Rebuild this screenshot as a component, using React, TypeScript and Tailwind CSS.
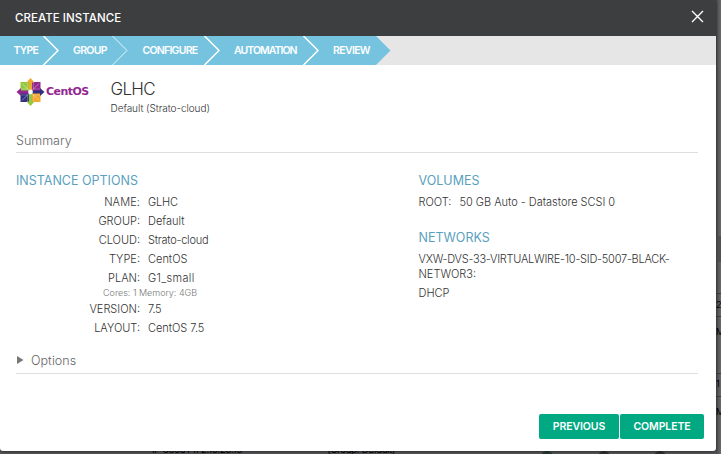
import React from "react";

const body = "font-['Inter','Liberation_Sans',sans-serif]";
const strong = "font-['Inter','Liberation_Sans',sans-serif]";

function Step({ label, width, pad, tracking, line }: { label: string; width: string; pad: string; tracking: string; line: number }) {
  return (
    <div className={`flex h-full items-center justify-between bg-[#76c3df] ${width} ${pad}`}>
      <span className={`${strong} ${tracking} whitespace-nowrap text-[10.5px] font-semibold text-white`}>{label}</span>
      <svg width="16" height="29" viewBox="0 0 16 29" className="shrink-0">
        <path d="M0 -0.5 L15 14.5 L0 29.5" fill="none" stroke="#fff" strokeWidth={line} />
      </svg>
    </div>
  );
}

function Row({ label, value, tl = "", tv = "" }: { label: string; value: string; tl?: string; tv?: string }) {
  return (
    <div className="flex h-[19px] items-center text-[11px] font-light text-[#333]">
      <span className={`flex w-[124px] justify-end ${tl}`}>{label}</span>
      <span className={`ml-[8px] whitespace-nowrap ${tv}`}>{value}</span>
    </div>
  );
}

function Logo() {
  return (
    <div className="flex h-[28px] w-[73px] items-center">
      <svg width="29" height="28" viewBox="0 0 28 28" className="shrink-0">
        <rect x="4" y="4" width="9.7" height="9.7" fill="#94c83d" />
        <rect x="14.3" y="4" width="9.7" height="9.7" fill="#93278f" />
        <rect x="4" y="14.3" width="9.7" height="9.7" fill="#32307e" />
        <rect x="14.3" y="14.3" width="9.7" height="9.7" fill="#efa72c" />
        <path d="M5.5 5.5 L22.5 22.5 M22.5 5.5 L5.5 22.5" stroke="#fff" strokeWidth=".9" opacity=".45" />
        <path d="M11 4 V11 H4 M17 4 V11 H24 M11 24 V17 H4 M17 24 V17 H24" fill="none" stroke="#fff" strokeWidth=".5" opacity=".45" />
        <path d="M14 0 L18 4.5 H15.6 V13 H12.4 V4.5 H10Z" fill="#efa72c" />
        <path d="M28 14 L23.5 18 V15.6 H15 V12.4 H23.5 V10Z" fill="#32307e" />
        <path d="M14 28 L10 23.5 H12.4 V15 H15.6 V23.5 H18Z" fill="#94c83d" />
        <path d="M0 14 L4.5 10 V12.4 H13 V15.6 H4.5 V18Z" fill="#93278f" />
        <circle cx="14" cy="14" r="2.4" fill="#fff" />
      </svg>
      <span className="ml-px font-['DejaVu_Sans',sans-serif] text-[11px] font-bold tracking-[-0.55px] text-[#93278f]">CentOS</span>
    </div>
  );
}

export default function App() {
  return (
    <div className={`${body} relative h-[454px] w-[721px] overflow-hidden bg-[#58585a]`}>
      <div className="absolute inset-y-0 left-[716px] w-[5px] overflow-hidden bg-gradient-to-r from-[#48484a] to-[#6b6b6d] text-[9px] text-black">
        <div className="absolute top-[236px] h-[26px] w-full bg-[#505052]" />
        <div className="absolute top-[293px] h-[24px] w-full border-y border-[#3c3c3e]" />
        <div className="absolute top-[373px] h-[24px] w-full border-y border-[#3c3c3e]" />
        <span className="absolute top-[298px]">2</span>
        <span className="absolute top-[325px]">M</span>
        <span className="absolute top-[377px]">1</span>
        <span className="absolute top-[405px]">M</span>
      </div>
      <span className="absolute left-[152px] top-[443px] text-[10px] leading-[13px] tracking-[-0.4px] text-black">IP 35501 172.16.28.16</span>
      <span className="absolute left-[327px] top-[443px] text-[10px] leading-[13px] tracking-[-0.5px] text-black">(Group: Default)</span>
      <div className="absolute left-[541px] top-[451px] h-3 w-3 rounded-full bg-[#263a33]" />
      <div className="absolute left-[598px] top-[451px] h-3 w-3 rounded-full bg-[#303032]" />
      <div className="absolute left-[654px] top-[451px] h-3 w-3 rounded-full bg-[#303032]" />

      <div className="relative flex h-[451px] w-[716px] flex-col overflow-hidden rounded-b-[3px] bg-white shadow-[0_1px_3px_rgba(0,0,0,0.5)]">
        <header className="flex h-[36px] shrink-0 items-center justify-between bg-[#3d3e40] pl-[15px] pr-[12px]">
          <h1 className={`${strong} mt-px text-[11.5px] font-medium tracking-[0.05px] text-white`}>CREATE INSTANCE</h1>
          <svg width="13" height="13" viewBox="0 0 13 13" className="-mt-[4px]">
            <path d="M1 1 L12 12 M12 1 L1 12" stroke="#fff" strokeWidth="1.4" />
          </svg>
        </header>
        <nav className="flex h-[29px] shrink-0 bg-[#e6e6e6]">
          <Step label="TYPE" width="w-[59px]" pad="pl-[13.5px]" tracking="tracking-[-0.8px]" line={1.5} />
          <Step label="GROUP" width="w-[69px]" pad="pl-[14px]" tracking="tracking-[-0.7px]" line={0.8} />
          <Step label="CONFIGURE" width="w-[92px]" pad="pl-[14.5px]" tracking="tracking-[-0.75px]" line={1.5} />
          <Step label="AUTOMATION" width="w-[99px]" pad="pl-[14px]" tracking="tracking-[-0.95px]" line={1.5} />
          <div className="flex w-[57px] items-center bg-[#76c3df] pl-[14px]">
            <span className={`${strong} text-[10.5px] font-semibold tracking-[-0.65px] text-white`}>REVIEW</span>
          </div>
          <svg width="15" height="29" viewBox="0 0 15 29"><path d="M0 0 L14.5 14.5 L0 29Z" fill="#76c3df" /></svg>
        </nav>

        <main className="flex flex-1 flex-col pl-4 pr-[18px]">
          <div className="flex h-[62px] pt-[13px]">
            <Logo />
            <div className="ml-[21.5px]">
              <div className="pt-px text-[17px] font-light leading-[20px] tracking-[-0.7px] text-[#333]">GLHC</div>
              <div className="text-[10px] font-light leading-[18px] tracking-[-0.05px] text-[#333]">Default (Strato-cloud)</div>
            </div>
          </div>
          <div className="flex h-[26px] items-center border-b border-[#dedede] pt-[4px] text-[12.5px] font-light text-[#666]">
            <span>Summary</span>
          </div>
          <div className="flex h-[185px] pt-[18px]">
            <section className="w-[402px]">
              <h2 className="h-[22px] text-[12.5px] leading-[19px] text-[#5a9fc0]">INSTANCE OPTIONS</h2>
              <Row label="NAME:" value="GLHC" tl="tracking-[0.1px]" tv="tracking-[-0.2px]" />
              <Row label="GROUP:" value="Default" />
              <Row label="CLOUD:" value="Strato-cloud" tv="tracking-[-0.25px]" />
              <Row label="TYPE:" value="CentOS" />
              <Row label="PLAN:" value="G1_small" tv="tracking-[0.35px]" />
              <div className="h-[12px] pl-[87px] text-[9px] font-light leading-[9px] text-[#777]">Cores: 1 Memory: 4GB</div>
              <Row label="VERSION:" value="7.5" tv="tracking-[-0.4px]" />
              <Row label="LAYOUT:" value="CentOS 7.5" tv="tracking-[-0.05px]" />
            </section>
            <section className="w-[280px] pl-[0.5px] text-[11px] font-light text-[#333]">
              <h2 className="h-[22px] text-[12.5px] font-normal leading-[19px] text-[#5a9fc0]">VOLUMES</h2>
              <div className="flex h-[19px] items-center whitespace-nowrap">
                <span>ROOT:</span>
                <span className="ml-[8px] tracking-[-0.02px]">50 GB Auto - Datastore SCSI 0</span>
              </div>
              <h2 className="mt-[16px] h-[24px] text-[12.5px] font-normal leading-[19px] text-[#5a9fc0]">NETWORKS</h2>
              <div className="whitespace-nowrap leading-[15px] tracking-[-0.25px]">VXW-DVS-33-VIRTUALWIRE-10-SID-5007-BLACK-</div>
              <div className="leading-[15px]">NETWOR3:</div>
              <div className="flex h-[23px] items-center">DHCP</div>
            </section>
          </div>
          <div className="mt-[10px] flex h-[26px] items-center border-b border-[#dedede] text-[12.5px] font-light text-[#666]">
            <svg width="7" height="8" viewBox="0 0 7 8" className="mb-px ml-px"><path d="M0 0 L6.5 4 L0 8Z" fill="#777" /></svg>
            <span className="ml-[7px] pt-[2px] tracking-[0.05px]">Options</span>
          </div>
          <footer className={`${strong} -mr-[6px] mt-[40px] flex justify-end gap-px text-[10.5px] font-semibold tracking-[-0.1px] text-white`}>
            <button className="h-[25px] w-[80px] rounded-[2px] bg-[#01a982]">PREVIOUS</button>
            <button className="h-[25px] w-[84px] rounded-[2px] bg-[#01a982]">COMPLETE</button>
          </footer>
        </main>
      </div>
    </div>
  );
}
